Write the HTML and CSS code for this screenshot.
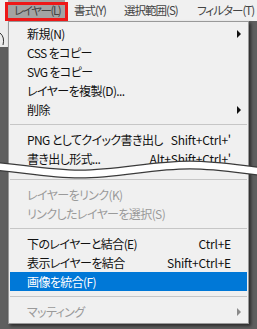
FILE: index.html
```html
<!DOCTYPE html>
<html lang="ja">
<head>
<meta charset="utf-8">
<link rel="stylesheet" href="styles.css">
</head>
<body>
<div class="menubar">
  <span class="mb-item active">レイヤー(L)</span>
  <span class="mb-item w-format">書式(Y)</span>
  <span class="mb-item w-select">選択範囲(S)</span>
  <span class="mb-item">フィルター(T)</span>
</div>
<div class="stage">
  <div class="side">
    <div class="side-panel">
      <svg class="side-curve" width="8" height="26" viewBox="0 0 8 26"><path d="M0 12 Q5 16 3 24" fill="none" stroke="#333" stroke-width="1"/></svg>
    </div>
  </div>
  <div class="menu">
    <div class="item"><span class="label">新規(N)</span><span class="key"></span><span class="arr"><i class="tri"></i></span></div>
    <div class="item"><span class="label">CSS をコピー</span></div>
    <div class="item"><span class="label">SVG をコピー</span></div>
    <div class="item"><span class="label">レイヤーを複製(D)...</span></div>
    <div class="item"><span class="label">削除</span><span class="key"></span><span class="arr"><i class="tri"></i></span></div>
    <div class="sep"></div>
    <div class="item"><span class="label">PNG としてクイック書き出し</span><span class="key">Shift+Ctrl+'</span></div>
    <div class="item"><span class="label">書き出し形式...</span><span class="key">Alt+Shift+Ctrl+'</span></div>
    <div class="cut"></div>
    <div class="sep"></div>
    <div class="item disabled"><span class="label">レイヤーをリンク(K)</span></div>
    <div class="item disabled"><span class="label">リンクしたレイヤーを選択(S)</span></div>
    <div class="sep"></div>
    <div class="item"><span class="label">下のレイヤーと結合(E)</span><span class="key">Ctrl+E</span></div>
    <div class="item"><span class="label">表示レイヤーを結合</span><span class="key">Shift+Ctrl+E</span></div>
    <div class="item hover"><span class="label">画像を統合(F)</span></div>
    <div class="sep"></div>
    <div class="item disabled"><span class="label">マッティング</span><span class="key"></span><span class="arr"><i class="tri"></i></span></div>
  </div>
</div>
<svg class="wave" width="257" height="30" viewBox="0 150 257 30">
  <path d="M-30 165 C10 165 40 174 80 174 C120 174 150 165 190 165 C230 165 260 174 300 174" fill="none" stroke="#3a3a3a" stroke-width="9"/>
  <path d="M-30 165 C10 165 40 174 80 174 C120 174 150 165 190 165 C230 165 260 174 300 174" fill="none" stroke="#ffffff" stroke-width="6.5"/>
</svg>
</body>
</html>
```
FILE: styles.css
```css
* { box-sizing: border-box; }
html, body { margin: 0; padding: 0; }
body {
  width: 257px;
  height: 329px;
  overflow: hidden;
  background: #5f5f5f;
  font-family: "Noto Sans CJK JP", sans-serif;
  font-size: 12px;
  font-feature-settings: "palt";
  letter-spacing: -0.6px;
  position: relative;
}
.menubar {
  height: 21px;
  background: #f0f0f0;
  display: flex;
  padding-left: 8px;
  color: #444;
  line-height: 21px;
  white-space: nowrap;
  font-size: 11.5px;
  letter-spacing: -1px;
  overflow: hidden;
}
.mb-item {
  padding: 0 0 0 7px;
  height: 21px;
  white-space: nowrap;
  flex: none;
}
.mb-item.active {
  position: relative;
  background: #a3a3a3;
  width: 57px;
  margin-right: 2px;
  padding-left: 6px;
  letter-spacing: -1.4px;
}
.mb-item.w-format { width: 50px; }
.mb-item.w-select { width: 73px; }
.mb-item.active::after {
  content: "";
  position: absolute;
  left: -3px;
  right: -3px;
  top: 2px;
  bottom: 0;
  border: 3px solid #ee1818;
}
.stage {
  display: flex;
  align-items: flex-start;
}
.side {
  width: 8px;
  flex: none;
}
.side-panel {
  height: 26px;
  background: #ececec;
}
.side-curve { display: block; }
.menu {
  width: 241px;
  flex: none;
  background: #f0f0f0;
  border: 1px solid #999;
  padding: 2px 1px;
  box-shadow: 2px 2px 3px rgba(0,0,0,0.55);
  color: #111;
}
.item {
  height: 19px;
  display: flex;
  align-items: center;
  padding-left: 17px;
  line-height: 19px;
  white-space: nowrap;
}
.item .label { flex: 1; white-space: nowrap; }
.item .key { white-space: nowrap; letter-spacing: -0.2px; }
.item .arr {
  width: 16px;
  flex: none;
  display: flex;
  align-items: center;
  padding-left: 6px;
}
.item:not(:has(.arr)) { padding-right: 16px; }
.tri {
  display: block;
  width: 0;
  height: 0;
  border-left: 4px solid #111;
  border-top: 4px solid transparent;
  border-bottom: 4px solid transparent;
}
.item.disabled { color: #9a9a9a; }
.item.disabled .tri { border-left-color: #8a8a8a; }
.item.hover { background: #0078d7; color: #fff; }
.sep {
  height: 11px;
  display: flex;
  align-items: center;
}
.sep::before {
  content: "";
  display: block;
  width: 100%;
  height: 1px;
  background: #c6c6c6;
}
.cut { height: 6px; }
.wave {
  position: absolute;
  left: 0;
  top: 150px;
}
```
